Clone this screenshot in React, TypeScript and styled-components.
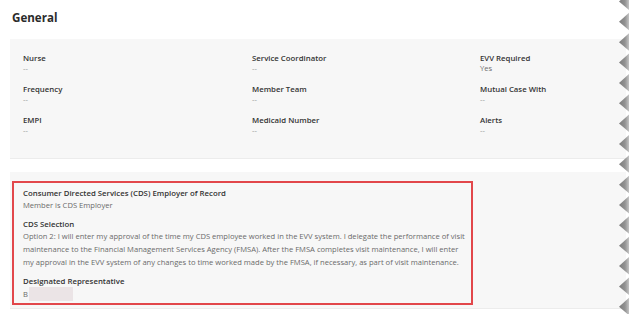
import styled, { createGlobalStyle } from "styled-components";

const GlobalStyle = createGlobalStyle`
  html, body {
    margin: 0;
    padding: 0;
    background: #ffffff;
  }
  body {
    font-family: "Open Sans", "Noto Sans", Arial, sans-serif;
    color: #333333;
    -webkit-font-smoothing: antialiased;
  }
`;

const fields = [
  { label: "Nurse", value: "--" },
  { label: "Service Coordinator", value: "--" },
  { label: "EVV Required", value: "Yes" },
  { label: "Frequency", value: "--" },
  { label: "Member Team", value: "--" },
  { label: "Mutual Case With", value: "--" },
  { label: "EMPI", value: "--" },
  { label: "Medicaid Number", value: "--" },
  { label: "Alerts", value: "--" },
];

const cdsLines = [
  "Option 2: I will enter my approval of the time my CDS employee worked in the EVV system. I delegate the performance of visit",
  "maintenance to the Financial Management Services Agency (FMSA). After the FMSA completes visit maintenance, I will enter",
  "my approval in the EVV system of any changes to time worked made by the FMSA, if necessary, as part of visit maintenance.",
];

// torn-paper edge down the right side of the screenshot
function TornEdge() {
  const step = 20.35;
  const teeth = Array.from({ length: 16 }, (_, i) => 1.5 + i * step);
  return (
    <EdgeWrap>
      <svg width="14" height="314" viewBox="0 0 14 314">
        <defs>
          <linearGradient id="tooth" x1="0" y1="0" x2="1" y2="0">
            <stop offset="0" stopColor="#7c7c7c" />
            <stop offset="0.6" stopColor="#929292" />
            <stop offset="1" stopColor="#c4c4c4" />
          </linearGradient>
        </defs>
        <rect x="11" y="0" width="3" height="314" fill="#ffffff" />
        {teeth.map((c) => (
          <polygon
            key={c}
            points={`14,${c - 9} 4,${c} 14,${c + 8.5}`}
            fill="url(#tooth)"
          />
        ))}
      </svg>
    </EdgeWrap>
  );
}

function App() {
  return (
    <Page>
      <GlobalStyle />
      <Title>General</Title>
      <InfoPanel>
        {fields.map((f) => (
          <Field key={f.label}>
            <Label>{f.label}</Label>
            <Value $muted={f.value === "--"}>{f.value}</Value>
          </Field>
        ))}
      </InfoPanel>
      <CdsPanel>
        <Highlight>
          <Section>
            <Label>Consumer Directed Services (CDS) Employer of Record</Label>
            <Text>Member is CDS Employer</Text>
          </Section>
          <Section>
            <Label>CDS Selection</Label>
            {cdsLines.map((l) => (
              <Text key={l}>{l}</Text>
            ))}
          </Section>
          <Section>
            <Label>Designated Representative</Label>
            <Text>
              B<Redacted />
            </Text>
          </Section>
        </Highlight>
      </CdsPanel>
      <TornEdge />
    </Page>
  );
}

export default App;

const Page = styled.div`
  position: relative;
  width: 629px;
  height: 314px;
  overflow: hidden;
  padding: 9px 0 0 10px;
  box-sizing: border-box;
`;

const Title = styled.h2`
  margin: 0 0 0 2px;
  font-size: 11.6px;
  line-height: 18px;
  font-weight: 700;
  color: #2b2b2b;
`;

const InfoPanel = styled.div`
  margin-top: 12px;
  width: 640px;
  height: 120px;
  box-sizing: border-box;
  background: #f7f7f7;
  border-bottom: 1px solid #ececec;
  padding: 14px 0 0 13px;
  display: grid;
  grid-template-columns: 229px 228px 1fr;
  row-gap: 10px;
  align-content: start;
`;

const Field = styled.div`
  display: flex;
  flex-direction: column;
`;

const Label = styled.div`
  font-size: 7.8px;
  line-height: 10px;
  font-weight: 600;
  color: #333333;
  white-space: nowrap;
`;

const Value = styled.div<{ $muted?: boolean }>`
  font-size: 7.6px;
  line-height: 11px;
  color: ${(p) => (p.$muted ? "#9a9a9a" : "#6f6f6f")};
`;

const CdsPanel = styled.div`
  margin-top: 13px;
  width: 640px;
  height: 137px;
  box-sizing: border-box;
  background: #f7f7f7;
  border-bottom: 1px solid #ececec;
  padding: 9px 0 0 2px;
`;

const Highlight = styled.div`
  width: 461px;
  box-sizing: border-box;
  border: 2px solid #e2474b;
  padding: 4px 9px 2px 9px;
  display: flex;
  flex-direction: column;
  gap: 6px;
`;

const Section = styled.div`
  display: flex;
  flex-direction: column;

  & > ${Label} {
    line-height: 12px;
  }
`;

const Text = styled.div`
  font-size: 7.6px;
  line-height: 13px;
  color: #6a6a6a;
  white-space: nowrap;
  display: flex;
  align-items: center;
`;

const Redacted = styled.span`
  display: inline-block;
  width: 44px;
  height: 14px;
  margin-left: 1px;
  background: #ebe4e6;
  filter: blur(0.6px);
`;

const EdgeWrap = styled.div`
  position: absolute;
  top: 0;
  right: 0;
  width: 14px;
  height: 314px;
  line-height: 0;
`;
